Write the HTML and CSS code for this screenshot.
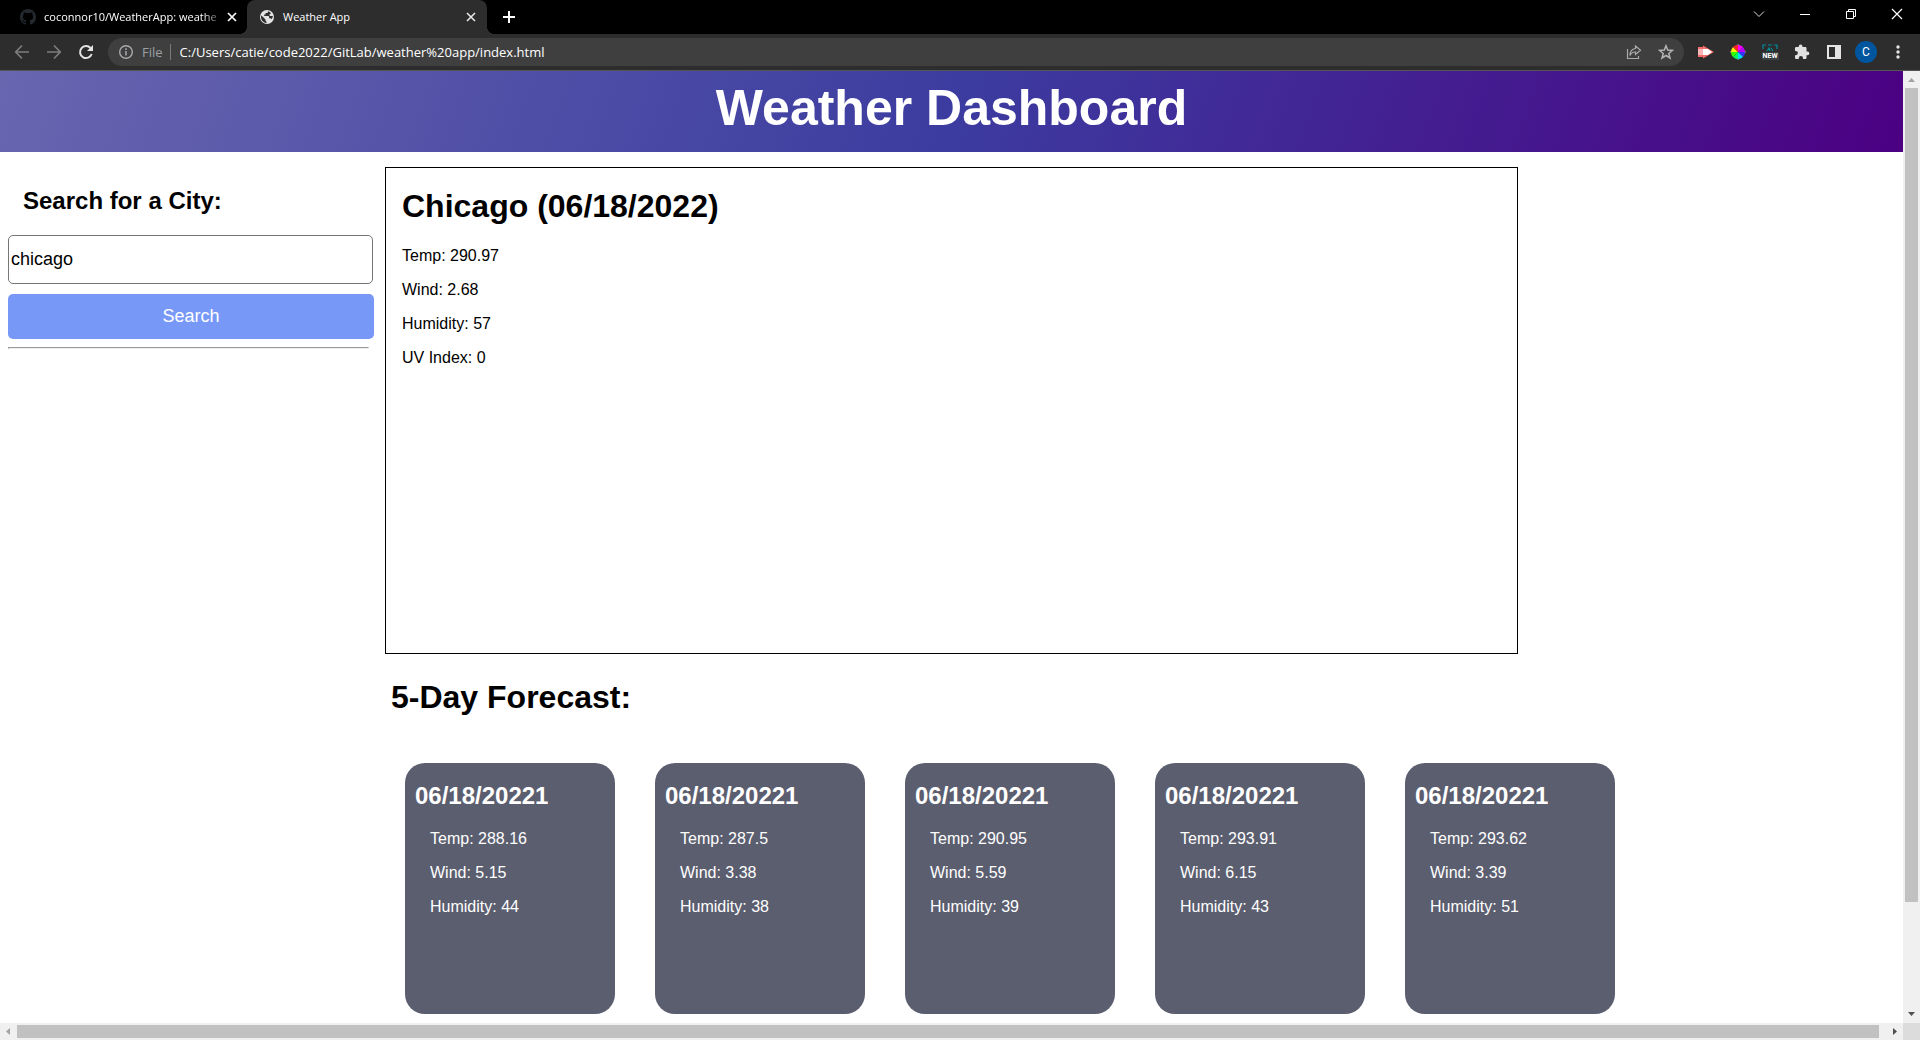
FILE: index.html
```html
<!DOCTYPE html>
<html lang="en">
<head>
<meta charset="utf-8">
<title>Weather App</title>
<link rel="stylesheet" href="styles.css">
</head>
<body>
<div class="tabstrip">
  <div class="tab tab-idle">
    <svg class="i16" viewBox="0 0 16 16"><path fill="#24292f" d="M8 0C3.58 0 0 3.58 0 8c0 3.54 2.29 6.53 5.47 7.59.4.07.55-.17.55-.38 0-.19-.01-.82-.01-1.49-2.01.37-2.53-.49-2.69-.94-.09-.23-.48-.94-.82-1.13-.28-.15-.68-.52-.01-.53.63-.01 1.08.58 1.23.82.72 1.21 1.87.87 2.33.66.07-.52.28-.87.51-1.07-1.78-.2-3.64-.89-3.64-3.95 0-.87.31-1.59.82-2.15-.08-.2-.36-1.02.08-2.12 0 0 .67-.21 2.2.82a7.6 7.6 0 0 1 4 0c1.53-1.04 2.2-.82 2.2-.82.44 1.1.16 1.92.08 2.12.51.56.82 1.27.82 2.15 0 3.07-1.87 3.75-3.65 3.95.29.25.54.73.54 1.48 0 1.07-.01 1.93-.01 2.2 0 .21.15.46.55.38A8 8 0 0 0 16 8c0-4.42-3.58-8-8-8z"/></svg>
    <span class="tab-title fade">coconnor10/WeatherApp: weathe</span>
    <button class="icon-btn" aria-label="Close tab"><svg class="i16" viewBox="0 0 16 16"><path d="M4 4l8 8M12 4l-8 8" stroke="#fff" stroke-width="1.7"/></svg></button>
  </div>
  <div class="tab tab-active">
    <svg class="i16" viewBox="0 0 16 16"><circle cx="8" cy="8" r="7" fill="#e3e3e3"/><path fill="#2d2d2d" d="M2.500 6.500l4 4v1.200l1 1V14C4.500 13.800 2 11.200 2 8c0-.5.100-1 .500-1.500zM9 2.200c0 1.100-.3 1.900-1.300 1.900H6.500v1.300H5.200v1.500h3.900c.7 0 1 .4 1 1v1.400h.9c.7 0 1.200.4 1.400 1 .9-1 1.400-2 1.500-3.300H11.700L10.500 6.800V5.500L12 4.200A6 6 0 0 0 9 2.200z"/></svg>
    <span class="tab-title">Weather App</span>
    <button class="icon-btn" aria-label="Close tab"><svg class="i16" viewBox="0 0 16 16"><path d="M4 4l8 8M12 4l-8 8" stroke="#e8e8e8" stroke-width="1.6"/></svg></button>
  </div>
  <button class="icon-btn new-tab" aria-label="New tab"><svg class="i16" viewBox="0 0 16 16"><path d="M8 2v12M2 8h12" stroke="#fff" stroke-width="2"/></svg></button>
  <div class="window-controls">
    <button class="icon-btn" aria-label="Search tabs"><svg class="i16" viewBox="0 0 16 16"><path d="M3 5.500l5 5 5-5" fill="none" stroke="#ddd"/></svg></button>
    <button class="icon-btn" aria-label="Minimize"><svg class="i16" viewBox="0 0 16 16"><path d="M3 8.500h10" stroke="#fff"/></svg></button>
    <button class="icon-btn" aria-label="Restore"><svg class="i16" viewBox="0 0 16 16"><path d="M3.500 5.500h7v7h-7zM5.500 5.500v-2h7v7h-2" fill="none" stroke="#fff"/></svg></button>
    <button class="icon-btn" aria-label="Close"><svg class="i16" viewBox="0 0 16 16"><path d="M3 3l10 10M13 3L3 13" stroke="#fff" stroke-width="1.200"/></svg></button>
  </div>
</div>

<div class="toolbar">
  <div class="nav-buttons">
    <button class="icon-btn" aria-label="Back"><svg class="i16" viewBox="0 0 16 16"><path d="M15 8H2M8 1.500L1.700 8 8 14.500" fill="none" stroke="#7d7d7d" stroke-width="1.700"/></svg></button>
    <button class="icon-btn" aria-label="Forward"><svg class="i16" viewBox="0 0 16 16"><path d="M1 8h13M8 1.500L14.300 8 8 14.500" fill="none" stroke="#7d7d7d" stroke-width="1.700"/></svg></button>
    <button class="icon-btn" aria-label="Reload"><svg class="i16" viewBox="0 0 16 16"><path d="M13.700 10A6 6 0 1 1 12.500 4" fill="none" stroke="#e4e4e4" stroke-width="2"/><path d="M15 1v6H9z" fill="#e4e4e4"/></svg></button>
  </div>
  <div class="omnibox">
    <svg class="i16" viewBox="0 0 16 16"><circle cx="8" cy="8" r="6.300" fill="none" stroke="#a8abae" stroke-width="1.400"/><path d="M8 7v4.500M8 4.300v1.600" stroke="#a8abae" stroke-width="1.500"/></svg>
    <span class="scheme">File</span>
    <input class="url" aria-label="Address" value="C:/Users/catie/code2022/GitLab/weather%20app/index.html">
    <button class="icon-btn" aria-label="Share"><svg class="i16" viewBox="0 0 16 16"><path d="M1.500 5v9.500h11V12M9.500 2l5 4.300-5 4.200V8C7 8 5 9 4 11.500 4 7.500 6 5 9.500 4.500z" fill="none" stroke="#aaa" stroke-width="1.200"/></svg></button>
    <button class="icon-btn" aria-label="Bookmark"><svg class="i16" viewBox="0 0 16 16"><path d="M8 1.800l1.700 4.300 4.700.3-3.600 3 1.200 4.600L8 11.500 4 14l1.200-4.600-3.600-3 4.700-.3z" fill="none" stroke="#b4b4b4" stroke-width="1.500"/></svg></button>
  </div>
  <div class="extensions">
    <button class="icon-btn" aria-label="Video extension"><svg class="i16" viewBox="0 0 16 16"><path fill="#f36d6d" d="M0 3h5V1.500L16 8 5 14.500V13H0z"/><path fill="#f7b5b5" d="M0 5h5v6H0z"/><path fill="#fff" d="M5 5h5l4 3-4 3H5z"/></svg></button>
    <button class="icon-btn" aria-label="Color picker"><svg class="i16" viewBox="0 0 16 16"><path d="M8 0l2 2H6zM8 16l2-2H6zM0 8l2-2v4zM16 8l-2-2v4z" fill="#999"/><g><path fill="#f0f" d="M8 8V1a7 7 0 0 1 5 2z"/><path fill="#b0f" d="M8 8l5-5a7 7 0 0 1 2 5z"/><path fill="#33f" d="M8 8h7a7 7 0 0 1-2 5z"/><path fill="#0df" d="M8 8l5 5a7 7 0 0 1-5 2z"/><path fill="#0f6" d="M8 8v7a7 7 0 0 1-5-2z"/><path fill="#3f0" d="M8 8l-5 5a7 7 0 0 1-2-5z"/><path fill="#fe0" d="M8 8H1a7 7 0 0 1 2-5z"/><path fill="#f22" d="M8 8L3 3a7 7 0 0 1 5-2z"/></g></svg></button>
    <button class="icon-btn" aria-label="Capture extension"><span class="capture"><svg viewBox="0 0 16 8"><path d="M1 5V1h3M6 1h4M12 1h3v4M5 7l2-3 1 3M9 4l2 3" fill="none" stroke="#008a99" stroke-width="1.200"/></svg><span class="badge">NEW</span></span></button>
    <button class="icon-btn" aria-label="Extensions"><svg class="i16" viewBox="0 0 16 16"><path fill="#e0e0e0" d="M13.500 7.500h-1V4.300c0-.8-.6-1.300-1.300-1.300H8.500V2.500a1.900 1.900 0 0 0-3.800 0V3H2.300C1.500 3 1 3.600 1 4.300V7h.8a2.100 2.100 0 0 1 0 4.200H1v2.500c0 .8.600 1.300 1.300 1.300h2.500v-.8a2.100 2.100 0 0 1 4.200 0v.8h2.200c.8 0 1.300-.6 1.300-1.300v-2.500h1a1.850 1.850 0 0 0 0-3.700z"/></svg></button>
    <button class="icon-btn" aria-label="Side panel"><svg class="i16" viewBox="0 0 16 16"><path fill="#e4e4e4" fill-rule="evenodd" d="M1 1h14v14H1zM3 3v10h6V3z"/></svg></button>
    <button class="icon-btn" aria-label="Profile"><span class="avatar">C</span></button>
    <button class="icon-btn" aria-label="Menu"><svg class="i16" viewBox="0 0 16 16"><g fill="#e4e4e4"><circle cx="8" cy="3" r="1.700"/><circle cx="8" cy="8" r="1.700"/><circle cx="8" cy="13" r="1.700"/></g></svg></button>
  </div>
</div>

<div class="viewport">
  <div class="page">
    <header class="hero"><h1>Weather Dashboard</h1></header>
    <main class="layout">
      <form class="search">
        <label class="search-label" for="city">Search for a City:</label>
        <input class="city" id="city" type="text" value="chicago">
        <button class="search-btn" type="button">Search</button>
        <hr>
      </form>
      <section class="current">
        <h2>Chicago (06/18/2022)</h2>
        <p>Temp: 290.97</p>
        <p>Wind: 2.68</p>
        <p>Humidity: 57</p>
        <p>UV Index: 0</p>
      </section>
      <section class="forecast">
        <h2>5-Day Forecast:</h2>
        <div class="cards">
          <article class="card"><h3>06/18/20221</h3><p>Temp: 288.16</p><p>Wind: 5.15</p><p>Humidity: 44</p></article>
          <article class="card"><h3>06/18/20221</h3><p>Temp: 287.5</p><p>Wind: 3.38</p><p>Humidity: 38</p></article>
          <article class="card"><h3>06/18/20221</h3><p>Temp: 290.95</p><p>Wind: 5.59</p><p>Humidity: 39</p></article>
          <article class="card"><h3>06/18/20221</h3><p>Temp: 293.91</p><p>Wind: 6.15</p><p>Humidity: 43</p></article>
          <article class="card"><h3>06/18/20221</h3><p>Temp: 293.62</p><p>Wind: 3.39</p><p>Humidity: 51</p></article>
        </div>
      </section>
    </main>
  </div>
  <div class="vbar">
    <svg class="arrow" viewBox="0 0 17 17"><path fill="#a3a3a3" d="M5 11l3.500-4 3.500 4z"/></svg>
    <div class="vtrack"><div class="vthumb"></div></div>
    <svg class="arrow" viewBox="0 0 17 17"><path fill="#505050" d="M5 6h7l-3.500 4z"/></svg>
  </div>
  <div class="hbar">
    <svg class="arrow" viewBox="0 0 17 17"><path fill="#a3a3a3" d="M10 5v7L6 8.500z"/></svg>
    <div class="htrack"><div class="hthumb"></div></div>
    <svg class="arrow" viewBox="0 0 17 17"><path fill="#505050" d="M7 5v7l4-3.500z"/></svg>
  </div>
  <div class="corner"></div>
</div>
</body>
</html>
```
FILE: styles.css
```css
* { box-sizing: border-box; }

body {
  margin: 0;
  height: 100vh;
  display: flex;
  flex-direction: column;
  overflow: hidden;
  background: #fff;
  color: #000;
  font-family: "Liberation Sans", Arial, sans-serif;
  font-size: 16px;
  line-height: 18px;
}

h1, h2, h3, p { margin: 0; }
svg { display: block; flex: none; }
.i16 { width: 16px; height: 16px; }

.icon-btn {
  display: flex;
  align-items: center;
  justify-content: center;
  width: 32px;
  height: 28px;
  padding: 0;
  border: 0;
  background: none;
  flex: none;
}

/* Browser frame */
.tabstrip {
  display: flex;
  height: 34px;
  flex: none;
  background: #000;
  color: #fff;
  font: 12px/16px "Open Sans", "Noto Sans", sans-serif;
}
.tab {
  position: relative;
  display: flex;
  align-items: center;
  width: 240px;
  padding-left: 12px;
}
.tab-idle { width: 247px; padding-left: 20px; }
.tab-title { flex: 1; margin-left: 8px; white-space: nowrap; font-size: 11px; }
.fade { mask-image: linear-gradient(90deg, #000 88%, transparent); }
.tab .icon-btn { width: 16px; margin-right: 8px; }
.tab-idle .icon-btn { margin-right: 7px; }
.tab-active { background: #2d2d2d; border-radius: 8px 8px 0 0; }
.tab-active::before,
.tab-active::after {
  content: "";
  position: absolute;
  bottom: 0;
  width: 8px;
  height: 8px;
}
.tab-active::before { left: -8px; background: radial-gradient(circle at 0 0, transparent 8px, #2d2d2d 8px); }
.tab-active::after { right: -8px; background: radial-gradient(circle at 100% 0, transparent 8px, #2d2d2d 8px); }
.new-tab { width: 44px; height: 34px; }
.window-controls { display: flex; margin-left: auto; }
.window-controls .icon-btn { width: 46px; }

.toolbar {
  display: flex;
  align-items: center;
  height: 37px;
  flex: none;
  padding: 0 6px;
  background: #2d2d2d;
  border-bottom: 1px solid #555;
  font: 13px/16px "Open Sans", "Noto Sans", sans-serif;
}
.nav-buttons, .extensions { display: flex; }
.omnibox {
  display: flex;
  align-items: center;
  flex: 1;
  height: 28px;
  margin: 0 6px;
  padding: 0 2px 0 10px;
  border-radius: 14px;
  background: #3f3f3f;
}
.scheme {
  margin-left: 8px;
  padding-right: 7px;
  border-right: 1px solid #7b7b7b;
  color: #9aa0a6;
}
.url {
  flex: 1;
  min-width: 0;
  padding: 0 0 0 9px;
  border: 0;
  background: none;
  color: #fff;
  font: inherit;
}
.capture { display: flex; flex-direction: column; align-items: center; width: 16px; }
.capture svg { width: 16px; height: 8px; }
.badge {
  padding: 0 1px;
  background: #3a3f44;
  color: #fff;
  font: 700 7px/8px Roboto, sans-serif;
}
.avatar {
  width: 22px;
  height: 22px;
  border-radius: 50%;
  background: #00569e;
  color: #fff;
  font: 12px/22px Roboto, sans-serif;
  text-align: center;
}

/* Scrolled viewport */
.viewport {
  flex: 1;
  min-height: 0;
  display: grid;
  grid-template-columns: minmax(0, 1fr) 17px;
  grid-template-rows: minmax(0, 1fr) 17px;
}
.page { overflow: hidden; }
.arrow { width: 17px; height: 17px; }
.vbar, .hbar { display: flex; background: #f0f0f0; }
.vbar { flex-direction: column; }
.vtrack { flex: 1; padding: 0 2px; }
.vthumb { height: 88.7%; background: #c1c1c1; }
.htrack { flex: 1; padding: 2px 0; }
.hthumb { width: 99.6%; height: 13px; background: #c1c1c1; }
.corner { background: #dcdcdc; }

/* Weather dashboard */
.hero {
  padding: 9px 0 15px;
  background: linear-gradient(110deg, #6866af, #3c3ca0 50%, #4b0082);
  color: #fff;
  text-align: center;
}
.hero h1 { font-size: 50px; line-height: 57px; }

.layout {
  display: grid;
  grid-template-columns: 385px minmax(0, 1fr) 385px;
  padding-top: 15px;
}
.search {
  display: flex;
  flex-direction: column;
  padding: 20px 11px 0 8px;
}
.search-label {
  margin: 0 0 20px 15px;
  font-size: 24px;
  font-weight: 700;
  line-height: 28px;
}
.city {
  height: 49px;
  margin-right: 1px;
  padding: 1px 2px;
  border: 1px solid #767676;
  border-radius: 5px;
  font: 18px/20px "Liberation Sans", Arial, sans-serif;
}
.search-btn {
  height: 45px;
  margin: 10px 0 8px;
  padding: 0 0 2px;
  border: 0;
  border-radius: 5px;
  background: #7898f8;
  color: #fff;
  font: 18px/20px "Liberation Sans", Arial, sans-serif;
}
.search hr { width: auto; margin: 0 5px 0 0; align-self: stretch; }

.current {
  min-height: 487px;
  padding: 20px 16px;
  border: 1px solid #000;
}
.current h2, .forecast h2 { font-size: 32px; line-height: 37px; }
.current h2 { margin-bottom: 22px; }
.current p, .card p { margin-bottom: 16px; }

.forecast { grid-column: 2 / -1; padding: 25px 0 0 6px; }
.cards { display: flex; gap: 40px; margin: 47px 0 0 14px; }
.card {
  width: 210px;
  min-height: 251px;
  padding: 19px 10px;
  border-radius: 20px;
  background: #5b5e6f;
  color: #fff;
}
.card h3 { margin-bottom: 20px; font-size: 24px; line-height: 28px; }
.card p { margin-left: 15px; }
```
